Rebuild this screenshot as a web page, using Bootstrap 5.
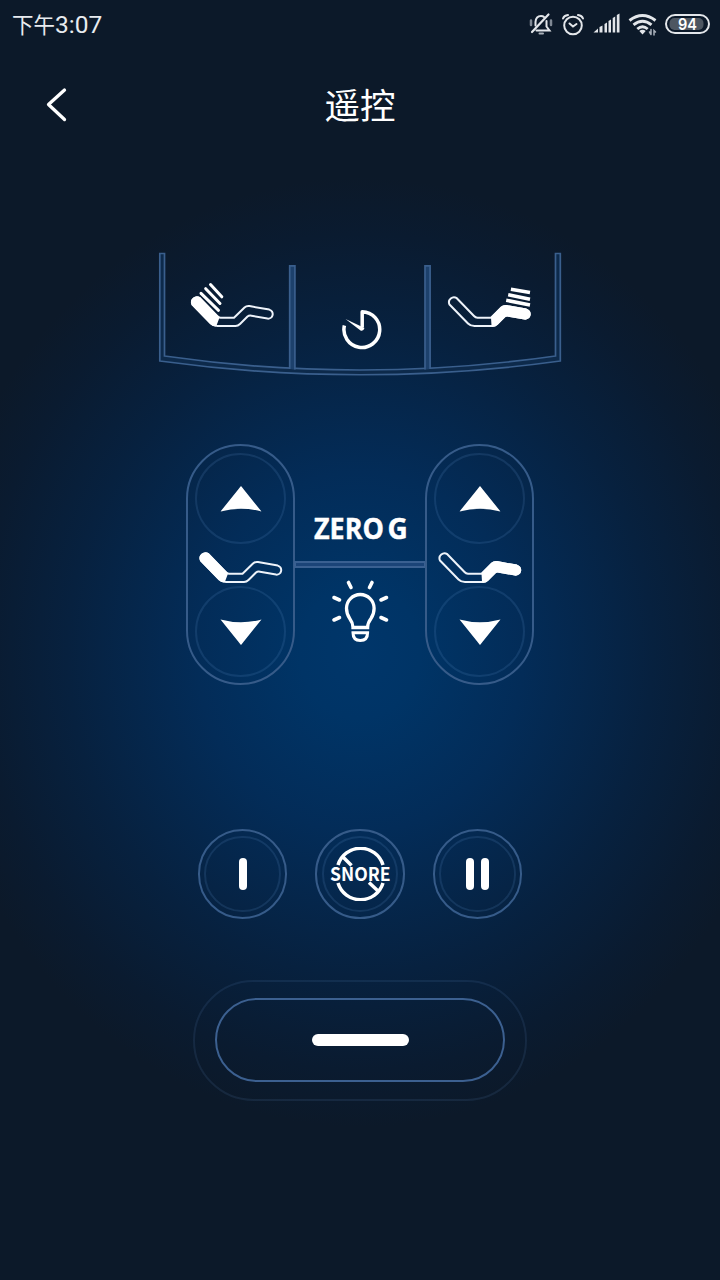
<!DOCTYPE html>
<html lang="zh-CN">
<head>
<meta charset="utf-8">
<meta name="viewport" content="width=device-width, initial-scale=1">
<title>遥控</title>
<link rel="stylesheet" href="https://cdn.jsdelivr.net/npm/bootstrap@5.3.0/dist/css/bootstrap.min.css">
<style>
  :root { --line: #365b89; --faint: rgba(90, 140, 195, .18); }
  body {
    width: 720px; height: 1280px; overflow: hidden; color: #fff;
    font-family: "Noto Sans CJK SC", "Noto Sans", sans-serif;
    background: radial-gradient(ellipse 430px 475px at 360px 652px, #00366a 0%, #003466 14%, #032c58 38%, #07213f 68%, #0a1b30 88%, #0c1929 100%) #0c1929;
  }
  svg { display: block; flex-shrink: 0; }
  .btn { --bs-btn-padding-x: 0; --bs-btn-padding-y: 0; --bs-btn-border-width: 0; line-height: 1; color: #fff; }
  .status-bar { height: 48px; padding: 0 10px 0 12px; font-size: 21.5px; line-height: 48px; color: #e8ebef; }
  .clock { font-family: Roboto, sans-serif; font-size: 24.5px; }
  .title-bar { height: 114px; padding-left: 45px; padding-right: 45px; }
  .title-bar h1 { font-size: 35.5px; font-weight: 400; line-height: 1; padding-bottom: 2px; }
  .remote { padding-top: 89px; }
  .massage { width: 404px; height: 127px; }
  .massage .btn { height: 106px; }
  .massage-row { padding: 0 29px 0 29.5px; }
  .lift { margin-top: 66px; height: 241px; width: 348px; }
  .pod { width: 109px; border: 2px solid var(--line); border-radius: 55px; padding: 6.5px 0; }
  .ring { width: 91px; height: 91px; border: 2px solid var(--faint); border-radius: 50%; flex-shrink: 0; }
  .ring svg { margin-top: 2px; }
  .pod .bed { margin: -18px 0 -13px; }
  .bridge { height: 7px; border: 2px solid #3a6091; background: #1b4478; margin: 0 -1px; }
  .zero { height: 117px; padding-bottom: 10px; }
  .modes { margin-top: 144px; gap: 28px; }
  .mode { width: 89.5px; height: 89.5px; border: 2px solid var(--line); border-radius: 50%; padding: 4.5px; }
  .mode .btn { border: 2px solid var(--faint); border-radius: 50%; gap: 6.5px; }
  .bar-v { width: 8px; height: 32px; border-radius: 4px; background: #fff; }
  .stop-halo { margin-top: 61px; width: 334px; height: 121px; border: 2px solid rgba(90, 130, 180, .15); border-radius: 61px; }
  .stop { width: 290px; height: 84px; border: 2px solid #3c6090; border-radius: 42px; }
  .bar-h { width: 97px; height: 12px; border-radius: 6px; background: #fff; }
</style>
</head>
<body>
<svg class="position-absolute" width="0" height="0" aria-hidden="true">
  <symbol id="bed" viewBox="-1 -16 86 50">
    <path d="M2 8.500 L20.500 27.500 Q23 30 27 30 H45 Q47.500 30 49.500 28 L57 20.500 Q58.500 19.300 61 19.700 L77 22.600 A4.600 4.600 0 0 0 78.800 13.600 L59 10.100 Q56 9.700 54 11.500 L43.500 21.800 H30 Q28 21.800 26.500 20 L9.300 2.200 A5 5 0 0 0 2 8.500Z" fill="none" stroke="#eef3fa" stroke-width="2" stroke-linejoin="round"/>
  </symbol>
  <symbol id="bed-back" viewBox="-1 -16 86 50">
    <use href="#bed" x="-1" y="-16" width="86" height="50"/>
    <path d="M2 8.500 L20.500 27.500 Q22 29.500 25 29.500 L28 21.500 L9.300 2.200 A5 5 0 0 0 2 8.500Z" fill="#fff" stroke="#fff" stroke-width="2" stroke-linejoin="round"/>
  </symbol>
  <symbol id="bed-legs" viewBox="-1 -16 86 50">
    <use href="#bed" x="-1" y="-16" width="86" height="50"/>
    <path d="M45 29.700 Q47.500 30 49.500 28 L57 20.500 Q58.500 19.300 61 19.700 L77 22.600 A4.600 4.600 0 0 0 78.800 13.600 L59 10.100 Q56 9.700 54 11.500 L44.500 21.500Z" fill="#fff" stroke="#fff" stroke-width="2" stroke-linejoin="round"/>
  </symbol>
  <symbol id="arrow" viewBox="0 0 42 26">
    <path d="M21 0 Q22 1 24 3.700 L41.500 25.500 Q21 20 .5 25.500 L18 3.700 Q20 1 21 0Z" fill="#fff"/>
  </symbol>
</svg>

<header class="status-bar d-flex justify-content-between align-items-center">
  <span>下午<span class="clock">3:07</span></span>
  <svg width="182" height="30" viewBox="528 9 182 30" fill="none" stroke="#e3e6ea" stroke-width="2" stroke-linecap="round">
    <path d="M536.500 30.500 H549.500 L546.500 26.500 V21 M535.500 25.500 V22 Q536 16 541 16 Q543 16 544 17"/>
    <path d="M532 32 L548.500 14.500" stroke-width="2.200"/>
    <path d="M539.500 33.500 H543" stroke="#aab1ba"/><path d="M531 20.500 V25 M551 20.500 V25" stroke="#7f8894" stroke-width="2.500"/>
    <circle cx="573" cy="25.500" r="8.800"/><path d="M569.500 23.500 L573 26.500 L576.500 24 M563 18.500 Q564 15.500 568 15 M583 18.500 Q582 15.500 578 15"/>
    <g stroke="none" fill="#e3e6ea"><path d="M593.500 32.500 L598 28.500 V32.500Z"/><path d="M599.500 27 l3-1.500 v7 h-3z M604.500 24 l2.500-1.500 v10 h-2.500z M608.500 21 l2.500-1.500 v13 h-2.500z M612.700 18 l2.500-1.500 v16 h-2.500z M616.800 15 l2.700-1.500 v19 h-2.700z"/></g>
    <g stroke-linecap="butt" stroke-width="2.900"><path d="M629.500 20.500 Q642.500 10.500 655.500 20.500 M633.500 24.900 Q642.500 17.700 651.500 24.900 M637.300 29 Q642.500 24.700 647.700 29"/></g>
    <path d="M639.300 31 Q642.500 28.500 645.700 31 L642.500 34.500Z" fill="#e3e6ea" stroke="none"/>
    <path d="M651 29.500 V34 M649.500 32 L651 34.500 M654 35 V30.500 L655.500 32" stroke-width="1.500" stroke="#a9b0ba"/>
    <rect x="666" y="15" width="43" height="18" rx="9"/>
    <rect x="669.500" y="18" width="34" height="12" rx="5" fill="#4d5661" stroke="none"/>
    <text x="678" y="29.800" fill="#fff" stroke="none" font-family="Inter, Roboto, sans-serif" font-size="16.500" font-weight="600" textLength="19" lengthAdjust="spacingAndGlyphs">94</text>
  </svg>
</header>

<nav class="title-bar d-flex align-items-center justify-content-between">
  <button class="btn" aria-label="返回"><svg width="24" height="36" viewBox="0 0 24 36"><path d="M19.500 3 L3.500 17.500 L19.500 32.500" fill="none" stroke="#fff" stroke-width="3.300" stroke-linecap="round" stroke-linejoin="round"/></svg></button>
  <h1 class="m-0">遥控</h1>
  <span class="px-2 mx-1"></span>
</nav>

<main class="remote d-flex flex-column align-items-center">
  <section class="massage position-relative">
    <svg class="position-absolute top-0 start-0" width="404" height="127" viewBox="158.500 251 404 127" fill="none" stroke="#3a5f8d" stroke-width="1.700">
      <path d="M160.300 253.500 H165 V356 Q360.500 384 556 356 V253.500 H560.800 V361 Q360.500 388.500 160.300 361Z" fill="#0d2a4b" />
      <path d="M290.200 369 V265.800 H295.400 V369.500 M425.500 369.500 V265.800 H430.600 V369" fill="#1d416c"/>
    </svg>
    <div class="massage-row d-flex justify-content-between position-relative h-100">
      <button class="btn"><svg width="86" height="50" viewBox="-2.500 -17 86 50"><use href="#bed-back" x="-1" y="-16" width="86" height="50"/><path d="M20 -11.500 L31.300 .8 M15.200 -7.300 L29.500 7.500 M10.500 -2.700 L28 14.300" stroke="#fff" stroke-width="3" stroke-linecap="round"/></svg></button>
      <button class="btn pt-5 ms-1"><svg width="44" height="44" viewBox="339.500 306 44 44" fill="none" stroke="#fff" stroke-width="3.500"><path d="M361.700 327.500 V311.700 A17.900 17.900 0 1 1 343.900 325.500" stroke-linejoin="round"/><path d="M345 319 L364 328 Q363 331.500 360 330.500Z" fill="#fff" stroke="none"/></svg></button>
      <button class="btn"><svg width="86" height="50" viewBox="-.500 -17 86 50"><use href="#bed-legs" x="-1" y="-16" width="86" height="50"/><path d="M63.400 -6.700 L82.500 -3.500 M60.700 -1.300 L82.500 3.200 M58.700 4.300 L82.500 9" stroke="#fff" stroke-width="3.500"/></svg></button>
    </div>
  </section>

  <section class="lift d-flex">
    <div class="pod d-flex flex-column align-items-center justify-content-between flex-shrink-0">
      <button class="btn ring d-flex align-items-center justify-content-center" aria-label="头部升"><svg width="42" height="26"><use href="#arrow"/></svg></button>
      <svg class="bed" width="86" height="50" viewBox="0 0 86 50"><use href="#bed-back" width="86" height="50" y="-1"/></svg>
      <button class="btn ring d-flex align-items-center justify-content-center" aria-label="头部降"><svg width="42" height="26" viewBox="0 0 42 26"><use href="#arrow" width="42" height="26" transform="matrix(1 0 0 -1 0 26)"/></svg></button>
    </div>
    <div class="flex-grow-1 d-flex flex-column">
      <button class="btn zero d-flex justify-content-center align-items-end">
        <svg width="100" height="50" viewBox="310 501 100 50" fill="#fff" stroke="#fff" stroke-width=".4" font-family="Open Sans, Noto Sans, sans-serif" font-size="28" font-weight="700"><text y="538.800"><tspan x="314" textLength="70" lengthAdjust="spacingAndGlyphs">ZERO</tspan><tspan x="387.500">G</tspan></text></svg>
      </button>
      <div class="bridge"></div>
      <button class="btn d-flex justify-content-center pt-2"><svg class="mt-1" width="64" height="68" viewBox="328 580 64 68" fill="none" stroke="#fff" stroke-width="3.300"><path d="M353 627.500 Q353 623 349.700 618.500 Q346.500 614 346.500 608.300 A13.800 13.800 0 0 1 374.100 608.300 Q374.100 614 371 618.500 Q367.600 623 367.600 627.500Z"/><path d="M353 632.800 H367.600 Q367.600 640.500 360.300 640.500 Q353 640.500 353 632.800Z" stroke-width="3"/><path d="M348.500 582.500 L351 587.500 M372 582.500 L369.500 587.500 M334 597.500 L339.500 600 M386.500 597.500 L381 600 M334 620 L339.500 617.500 M386.500 620 L381 617.500" stroke-linecap="round" stroke-width="3.600"/></svg></button>
    </div>
    <div class="pod d-flex flex-column align-items-center justify-content-between flex-shrink-0">
      <button class="btn ring d-flex align-items-center justify-content-center" aria-label="腿部升"><svg width="42" height="26"><use href="#arrow"/></svg></button>
      <svg class="bed" width="86" height="50" viewBox="0 0 86 50"><use href="#bed-legs" width="86" height="50" y="-1"/></svg>
      <button class="btn ring d-flex align-items-center justify-content-center" aria-label="腿部降"><svg width="42" height="26" viewBox="0 0 42 26"><use href="#arrow" width="42" height="26" transform="matrix(1 0 0 -1 0 26)"/></svg></button>
    </div>
  </section>

  <section class="modes d-flex">
    <div class="mode"><button class="btn w-100 h-100 d-flex align-items-center justify-content-center" aria-label="一"><span class="bar-v"></span></button></div>
    <div class="mode"><button class="btn w-100 h-100 d-flex align-items-center justify-content-center"><svg width="70" height="54" viewBox="325.500 847 70 54" fill="none" stroke="#fff" stroke-width="3.500"><path d="M338.500 865 A23.500 23.500 0 0 1 383.500 865 M338.500 883 A23.500 23.500 0 0 0 383.500 883 M344 857.500 L352 865.500 M369.500 882.500 L378 890.500"/><text x="330.500" y="881" fill="#fff" stroke="none" font-family="Noto Sans CJK SC, Noto Sans, sans-serif" font-size="19" font-weight="700" textLength="60.500" lengthAdjust="spacingAndGlyphs">SNORE</text></svg></button></div>
    <div class="mode"><button class="btn w-100 h-100 d-flex align-items-center justify-content-center" aria-label="二"><span class="bar-v"></span><span class="bar-v"></span></button></div>
  </section>

  <section class="stop-halo d-flex align-items-center justify-content-center">
    <button class="btn stop d-flex align-items-center justify-content-center" aria-label="停止"><span class="bar-h"></span></button>
  </section>
</main>
<script src="https://cdn.jsdelivr.net/npm/bootstrap@5.3.0/dist/js/bootstrap.bundle.min.js"></script>
</body>
</html>
